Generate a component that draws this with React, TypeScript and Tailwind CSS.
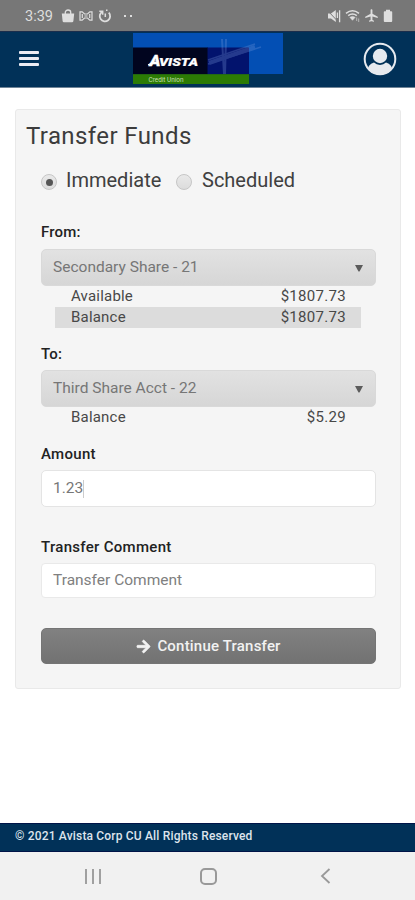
import { useState } from "react";
import { FaArrowRight } from "react-icons/fa";
import { MdAirplanemodeActive } from "react-icons/md";

type Row = { label: string; value: string; shaded?: boolean };

const FROM_ROWS: Row[] = [
  { label: "Available", value: "$1807.73" },
  { label: "Balance", value: "$1807.73", shaded: true },
];
const TO_ROWS: Row[] = [{ label: "Balance", value: "$5.29" }];

function StatusBar() {
  return (
    <div className="flex h-[31px] items-center bg-[#777777] pl-[25px] pr-[22px] text-[#dedede]">
      <span className="w-[29px] whitespace-nowrap pt-px text-[14.5px] leading-[31px]">3:39</span>
      <svg className="ml-[7px] h-[14px] w-[14px]" viewBox="0 0 14 14" fill="currentColor">
        <path d="M.8 4.500h12.400l-.8 7.400q-.1 1.300-1.400 1.300H3q-1.300 0-1.400-1.300z" />
        <path d="M4.300 5V3.200a2.700 2.200 0 0 1 5.400 0V5" fill="none" stroke="currentColor" strokeWidth="1.300" />
      </svg>
      <svg className="ml-[4px] h-[12px] w-[14px]" viewBox="0 0 14 12" fill="none" stroke="currentColor" strokeWidth="1.200">
        <path d="M1 1.800h2.200L5.500 4h3l2.300-2.200H13v8.400h-2.200L8.500 8h-3l-2.300 2.200H1z" />
        <path d="M3.300 4v4M10.700 4v4M5.500 6h3" />
      </svg>
      <svg className="ml-[5px] h-[14px] w-[14px]" viewBox="0 0 14 14" fill="none" stroke="currentColor" strokeWidth="1.800">
        <path d="M4.300 2.700A5.200 5.200 0 1 0 10.800 3.700" />
        <path d="M1.300 2.300h3.400v3.400M7.300 8V4.500M8 1.300h1.500" strokeWidth="1.500" />
      </svg>
      <div className="ml-[12px] flex gap-[4px]">
        <span className="h-[2px] w-[2px] bg-[#dedede]" />
        <span className="h-[2px] w-[2px] bg-[#dedede]" />
      </div>
      <svg className="ml-auto h-[14px] w-[14px]" viewBox="0 0 14 14" fill="currentColor">
        <path d="M1 4.500h3l4.800-3.500v12L4 9.500H1z" />
        <path d="M.8 1.800l9.500 10" stroke="#777777" strokeWidth="1" />
        <path d="M10.400 3.500v5.500M12.600 1.200v12" stroke="currentColor" strokeWidth="1.300" />
      </svg>
      <svg className="ml-[4px] h-[14px] w-[16px]" viewBox="0 0 16 14" fill="none" stroke="currentColor" strokeWidth="1.500">
        <path d="M1 4.300q6.500-5 13 0M3.200 6.700q4.300-3.200 8.600 0" />
        <path d="M4.800 8.300q2.700-1.800 5.400 0L7.500 11.300z" fill="currentColor" strokeWidth="0.500" />
        <path d="M11.700 8.500v3.500M13.700 9.500v3.500" strokeWidth="1" opacity="0.600" />
      </svg>
      <MdAirplanemodeActive className="ml-[3px] h-[15px] w-[15px]" />
      <svg className="ml-[4px] h-[14px] w-[10px]" viewBox="0 0 10 14" fill="currentColor">
        <path d="M3 .8h4v1.400h1.300q.9 0 .9.900v9q0 .9-.9.900H1.700q-.9 0-.9-.9v-9q0-.9.900-.9H3z" />
      </svg>
    </div>
  );
}

function Logo() {
  return (
    <svg className="mt-[1px] h-[51px] w-[151px]" viewBox="0 0 151 51">
      <rect width="150" height="41" fill="#034fb4" />
      <rect y="14.500" width="75" height="27" fill="#01051f" />
      <rect x="74.500" y="14.500" width="41.500" height="27" fill="#02136d" />
      <g fill="none" stroke="#7f9fe0" opacity="0.280">
        <path d="M75 27L122 11M75 31L128 14" strokeWidth="1.500" />
        <path d="M76 30L122 14" strokeWidth="4" />
        <path d="M89 6l2 35M93 6l-1 35" strokeWidth="2" />
      </g>
      <rect y="41.200" width="116" height="9.800" fill="#2c7b04" />
      <text x="16.500" y="32.500" fill="#ffffff" stroke="#ffffff" strokeWidth="0.300" fontSize="15" fontWeight="900" fontStyle="italic" textLength="11" lengthAdjust="spacingAndGlyphs">A</text>
      <text x="26" y="32.500" fill="#ffffff" stroke="#ffffff" strokeWidth="0.200" fontSize="10.500" fontWeight="900" fontStyle="italic" textLength="39" lengthAdjust="spacingAndGlyphs">VISTA</text>
      <path d="M15 31.800q3-.5 6-3.800h5" fill="none" stroke="#ffffff" strokeWidth="1.200" />
      <text x="15.500" y="48.800" fill="#c5dfb2" fontSize="6.500" textLength="35" lengthAdjust="spacingAndGlyphs">Credit Union</text>
    </svg>
  );
}

function Header() {
  return (
    <div className="flex h-[57px] items-start border-b border-t border-b-[#6f8497] border-t-[#1b2e4c] bg-[#013158]">
      <button className="ml-[19px] mt-[19px] flex w-[20px] flex-col gap-[3px]" aria-label="Menu">
        <span className="h-[3px] rounded-[1px] bg-[#ececf4]" />
        <span className="h-[3px] rounded-[1px] bg-[#ececf4]" />
        <span className="h-[3px] rounded-[1px] bg-[#ececf4]" />
      </button>
      <div className="ml-[94px]">
        <Logo />
      </div>
      <svg className="ml-auto mr-[18px] mt-[10px] h-[34px] w-[34px]" viewBox="0 0 34 34">
        <defs>
          <clipPath id="avatar">
            <circle cx="17" cy="17" r="15.500" />
          </clipPath>
        </defs>
        <g clipPath="url(#avatar)" fill="#e7eaef">
          <path d="M4 31q.5-9 7-10.500a8.500 8.500 0 0 0 12 0q6.500 1.500 7 10.500v3H4z" />
          <circle cx="17" cy="14" r="7.200" />
        </g>
        <circle cx="17" cy="17" r="15.300" fill="none" stroke="#e7eaef" strokeWidth="2" />
      </svg>
    </div>
  );
}

function Radio({ checked, onClick }: { checked: boolean; onClick: () => void }) {
  return (
    <button
      onClick={onClick}
      className="mt-[4px] flex h-[16px] w-[16px] items-center justify-center rounded-full border border-[#c6c6c6] bg-linear-to-b from-[#e9e9e9] to-[#dcdcdc]"
    >
      {checked && <span className="h-[7px] w-[7px] rounded-full bg-[#555555]" />}
    </button>
  );
}

function Select({ value }: { value: string }) {
  return (
    <div className="flex h-[37px] items-center justify-between rounded-[5px] border border-[#d9d9d9] bg-linear-to-b from-[#e2e2e2] to-[#d6d6d6] pl-[11px] pr-[12px]">
      <span className="pt-px text-[15.5px] text-[#767676]">{value}</span>
      <svg className="mt-px h-[7px] w-[8px]" viewBox="0 0 8 7">
        <path d="M0 0h8L4.500 6.500h-1z" fill="#5c5c5c" />
      </svg>
    </div>
  );
}

function Rows({ rows }: { rows: Row[] }) {
  return (
    <div className="pl-[14px] pr-[15px] text-[15px] leading-[21px] text-[#484848]">
      {rows.map((row) => (
        <div
          key={row.label}
          className={`flex h-[21px] justify-between pl-[16px] pr-[15px] ${row.shaded ? "bg-[#dcdcdc]" : ""}`}
        >
          <span className="tracking-[0.2px]">{row.label}</span>
          <span className="tracking-[0.3px]">{row.value}</span>
        </div>
      ))}
    </div>
  );
}

export default function App() {
  const [mode, setMode] = useState("Immediate");

  return (
    <div className="flex h-[900px] w-[415px] flex-col bg-white font-['Roboto',sans-serif]">
      <StatusBar />
      <Header />

      <div className="ml-[15px] mt-[21px] h-[580px] w-[386px] rounded-[3px] border border-[#e9e9e9] bg-[#f5f5f5]">
        <h1 className="ml-[10px] mt-[11px] h-[30px] text-[24px] leading-[30px] tracking-[0.4px] text-[#3c3c3c]">
          Transfer Funds
        </h1>
        <div className="ml-[25px] mt-[16px] flex h-[26px] items-center text-[20px] leading-[26px] text-[#404040]">
          <Radio checked={mode === "Immediate"} onClick={() => setMode("Immediate")} />
          <span className="ml-[9px] w-[110px]">Immediate</span>
          <Radio checked={mode === "Scheduled"} onClick={() => setMode("Scheduled")} />
          <span className="ml-[10px]">Scheduled</span>
        </div>

        <div className="ml-[25px] mr-[24px] mt-[28px] flex flex-col">
          <label className="h-[28px] text-[15px] font-medium leading-[22px] tracking-[0.2px] text-[#222222]">From:</label>
          <Select value="Secondary Share - 21" />
          <Rows rows={FROM_ROWS} />

          <label className="mt-[15px] h-[27px] text-[15px] font-medium leading-[22px] tracking-[0.2px] text-[#222222]">To:</label>
          <Select value="Third Share Acct - 22" />
          <Rows rows={TO_ROWS} />

          <label className="mt-[15px] h-[27px] text-[15px] font-medium leading-[22px] tracking-[0.3px] text-[#222222]">Amount</label>
          <div className="flex h-[37px] items-center rounded-[5px] border border-[#e4e4e4] bg-white pl-[11px] text-[15.5px] text-[#777777]">
            <span>1.23</span>
            <span className="h-[18px] w-px bg-[#cccccc]" />
          </div>

          <label className="mt-[29px] h-[27px] text-[15px] font-medium leading-[22px] tracking-[0.3px] text-[#222222]">
            Transfer Comment
          </label>
          <div className="flex h-[35px] items-center rounded-[4px] border border-[#e9e9e9] bg-white pl-[11px] pt-px text-[15.5px] text-[#808080]">
            Transfer Comment
          </div>

          <button className="mt-[30px] flex h-[36px] items-center justify-center gap-[6px] rounded-[5px] border border-[#757575] bg-linear-to-b from-[#818181] to-[#727272] text-[15px] font-medium text-[#f2f2f2]">
            <FaArrowRight className="h-[15px] w-[15px]" stroke="currentColor" strokeWidth="24" />
            <span className="tracking-[0.2px]">Continue Transfer</span>
          </button>
        </div>
      </div>

      <div className="mt-auto h-[29px] border-y border-[#001448] bg-[#013158] pl-[15px] text-[12px] font-medium leading-[24px] tracking-[0.17px] text-[#dde4ec]">
        © 2021 Avista Corp CU All Rights Reserved
      </div>
      <div className="flex h-[48px] items-center bg-[#f1f1f1]">
        <div className="ml-[85px] flex w-[16px] justify-between">
          <span className="h-[15px] w-[2px] bg-[#a0a0a0]" />
          <span className="h-[15px] w-[2px] bg-[#a0a0a0]" />
          <span className="h-[15px] w-[2px] bg-[#a0a0a0]" />
        </div>
        <span className="ml-[99px] h-[17px] w-[17px] rounded-[5px] border-2 border-[#999999]" />
        <svg className="ml-[103px] h-[16px] w-[11px]" viewBox="0 0 11 16" fill="none" stroke="#999999" strokeWidth="1.800">
          <path d="M9.500 1L2 8l7.500 7" />
        </svg>
      </div>
    </div>
  );
}
